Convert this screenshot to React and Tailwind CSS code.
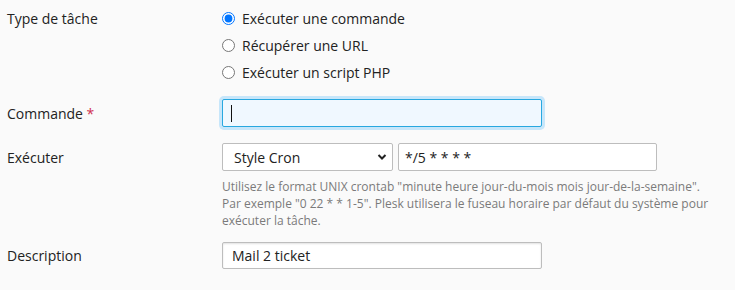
import { useState } from 'react';

/**
 * Cron task form (Plesk style)
 */
const Label = ({ children, required }) => (
  <div className="w-[215px] shrink-0">
    {children}
    {required && <span className="text-[#d0304f]"> *</span>}
  </div>
);

const Radio = ({ checked, label }) => (
  <label className="flex items-center h-[27px] gap-[7px]">
    <input type="radio" name="type" defaultChecked={checked} className="w-[13px] h-[13px] m-0 accent-[#0075ff]" />
    <span>{label}</span>
  </label>
);

export default function App() {
  const [mode, setMode] = useState('cron');

  return (
    <div className="w-[735px] h-[290px] bg-[#fafafa] pl-[7px] pt-[5px] font-['Open_Sans',sans-serif] text-[14px] text-[#222] leading-normal">
      {/* Type de tâche */}
      <div className="flex">
        <div className="w-[215px] shrink-0 h-[27px] flex items-center">Type de tâche</div>
        <div className="flex flex-col">
          <Radio checked label="Exécuter une commande" />
          <Radio label="Récupérer une URL" />
          <Radio label="Exécuter un script PHP" />
        </div>
      </div>

      {/* Commande */}
      <div className="flex items-center mt-[13px]">
        <Label required>Commande</Label>
        <div className="w-[320px] h-[28px] rounded-[2px] border border-[#28a8e0] bg-[#f0f8ff] ring-[3px] ring-[#c7e6fa] flex items-center pl-[8px]">
          <span className="w-px h-[17px] bg-[#111]" />
        </div>
      </div>

      {/* Exécuter */}
      <div className="flex mt-[16px]">
        <div className="w-[215px] shrink-0 h-[28px] flex items-center">Exécuter</div>
        <div className="flex flex-col">
          <div className="flex gap-[5px]">
            <div className="relative w-[171px] h-[28px]">
              <select
                value={mode}
                onChange={(e) => setMode(e.target.value)}
                className="appearance-none w-full h-full rounded-[2px] border border-[#bdbdbd] bg-white pl-[11px] pr-6 text-[14px] text-[#222] outline-none"
              >
                <option value="cron">Style Cron</option>
              </select>
              <svg className="absolute right-[6px] top-[10px] pointer-events-none" width="10" height="8" viewBox="0 0 10 8">
                <path d="M1.5 2 L5 5.5 L8.5 2" fill="none" stroke="#222" strokeWidth="2" />
              </svg>
            </div>
            <input
              defaultValue="*/5 * * * *"
              className="w-[259px] h-[28px] rounded-[2px] border border-[#bdbdbd] bg-white pl-[6px] text-[14px] text-[#222] outline-none"
            />
          </div>
          <p className="mt-[7px] w-[490px] text-[12px] leading-[17px] text-[#7a7a7a]">
            Utilisez le format UNIX crontab "minute heure jour-du-mois mois jour-de-la-semaine". Par exemple "0 22 * * 1-5". Plesk utilisera le fuseau horaire par défaut du système pour exécuter la tâche.
          </p>
        </div>
      </div>

      {/* Description */}
      <div className="flex items-center mt-[13px]">
        <Label>Description</Label>
        <input
          defaultValue="Mail 2 ticket"
          className="w-[320px] h-[27px] rounded-[2px] border border-[#bdbdbd] bg-white pl-[9px] text-[14px] text-[#222] outline-none shadow-[inset_0_1px_2px_rgba(0,0,0,0.12)]"
        />
      </div>
    </div>
  );
}
